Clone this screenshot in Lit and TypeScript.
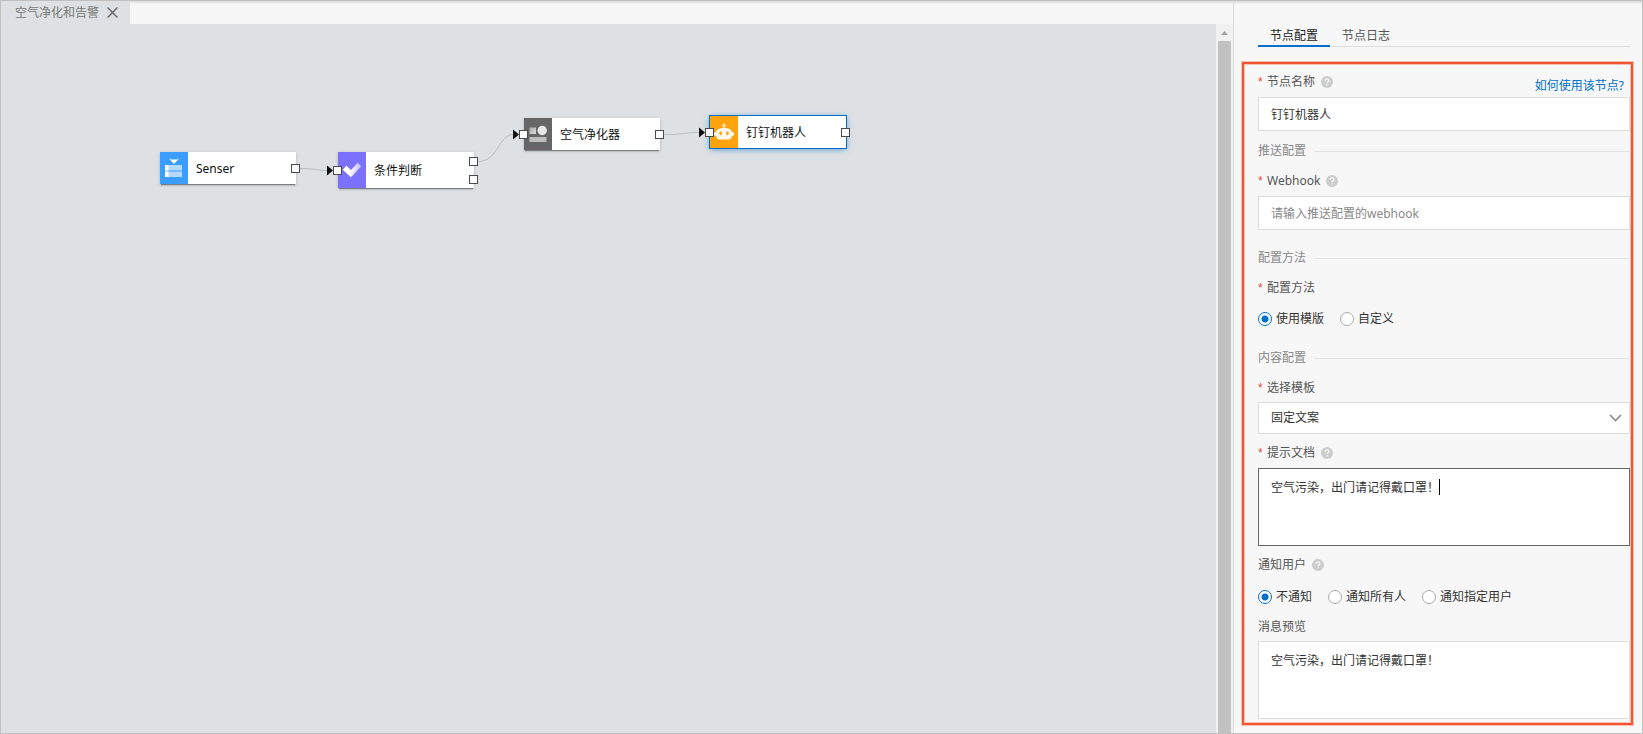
import { LitElement, html, svg, css, nothing } from "lit";
import { customElement, property, state } from "lit/decorators.js";
import { classMap } from "lit/directives/class-map.js";
import { styleMap } from "lit/directives/style-map.js";

const FONT = css`12px/20px "Noto Sans", "Noto Sans CJK SC", sans-serif`;

type Kind = "sensor" | "condition" | "device" | "robot";

interface FlowNode {
  id: string;
  kind: Kind;
  label: string;
  x: number;
  y: number;
  height: number;
  input: boolean;
  outputs: number[];
  selected?: boolean;
}

const NODE_WIDTH = 136;

const NODES: FlowNode[] = [
  { id: "n1", kind: "sensor", label: "Senser", x: 159, y: 128, height: 32, input: false, outputs: [16] },
  { id: "n2", kind: "condition", label: "条件判断", x: 337, y: 128, height: 36, input: true, outputs: [9, 27] },
  { id: "n3", kind: "device", label: "空气净化器", x: 523, y: 94, height: 32, input: true, outputs: [16] },
  { id: "n4", kind: "robot", label: "钉钉机器人", x: 709, y: 92, height: 32, input: true, outputs: [16], selected: true },
];

const LINKS: Array<[string, number, string]> = [
  ["n1", 0, "n2"],
  ["n2", 0, "n3"],
  ["n3", 0, "n4"],
];

const ICONS = {
  sensor: svg`
    <path d="M9 6.500l2.500 1h5l2.500-1-5 5.500z" fill="#fff"/>
    <rect x="5" y="13" width="17" height="5.500" fill="#b5d8ff"/>
    <rect x="5" y="19.500" width="17" height="5.500" fill="#b5d8ff"/>
    <rect x="5" y="13" width="3.500" height="5.500" fill="#fff"/>
    <rect x="5" y="19.500" width="3.500" height="5.500" fill="#fff"/>`,
  condition: svg`
    <defs><linearGradient id="ck" x1="0" y1="0" x2="1" y2="0">
      <stop offset="0.35" stop-color="#fff"/><stop offset="1" stop-color="#fff" stop-opacity="0.55"/>
    </linearGradient></defs>
    <path d="M4.700 15.800l3.700-4 4.600 4.200 6.700-7.300 3.500 3.500L13 23.300z" fill="url(#ck)"/>`,
  device: svg`
    <defs><linearGradient id="dv" x1="0" y1="0" x2="1" y2="1">
      <stop offset="0" stop-color="#a8a8a8"/><stop offset="1" stop-color="#dcdcdc"/>
    </linearGradient></defs>
    <rect x="5.500" y="9.500" width="6.500" height="6.500" fill="url(#dv)"/>
    <rect x="5.500" y="19" width="17" height="5" fill="#bdbdbd"/>
    <circle cx="18.200" cy="12.500" r="4.700" fill="#e6e6e6"/>`,
  robot: svg`
    <path d="M14 7v6M12 9.500h4" stroke="#fff" stroke-width="1.400" opacity="0.7"/>
    <path fill-rule="evenodd" fill="#fff" fill-opacity="0.92" d="M14 12c4.500 0 7 1 8 4 1.600.3 2.200 1.200 2.200 2s-.5 1.800-2.200 2c-.5 2.300-1.500 3.500-3 3.500H9c-1.500 0-2.500-1.200-3-3.500-1.500-.2-2.200-1.100-2.200-2s.6-1.700 2.200-2c1-3 3.500-4 8-4zM10.700 15.300c-.8 0-1.300.7-1.300 1.900s.5 2 1.300 2 1.300-.8 1.300-2-.5-1.900-1.300-1.900zM17.400 15.300c-.8 0-1.300.7-1.300 1.900s.5 2 1.300 2 1.300-.8 1.300-2-.5-1.900-1.300-1.900z"/>`,
};

@customElement("flow-canvas")
export class FlowCanvas extends LitElement {
  static styles = css`
    :host {
      display: block;
      position: relative;
      overflow: hidden;
      background: #dde1e4;
      font: ${FONT};
    }
    .links {
      position: absolute;
      inset: 0;
      width: 100%;
      height: 100%;
    }
    .link {
      fill: none;
      stroke: #b9bdc0;
      stroke-width: 1;
    }
    .arrow {
      fill: #111;
    }
    .node {
      position: absolute;
      display: flex;
      align-items: stretch;
      background: #fff;
      color: #111;
      box-shadow: 0 2px 1px -1px #7d8083, 0 1px 3px rgba(0, 0, 0, 0.2);
    }
    .node.selected {
      box-shadow: 0 0 0 1px #0070cc, 0 1px 6px rgba(0, 112, 204, 0.7);
    }
    .icon {
      display: grid;
      place-items: center;
      width: 28px;
    }
    .sensor .icon { background: #3b9dff; }
    .condition .icon { background: #7c71ff; }
    .device .icon { background: #666; }
    .robot .icon { background: #ffa30f; }
    .name {
      align-self: center;
      padding: 2px 0 0 8px;
    }
    .port {
      position: absolute;
      box-sizing: border-box;
      width: 9px;
      height: 9px;
      margin: -4px 0 0 -5px;
      border: 1px solid #4a4a4a;
      background: #fff;
    }
  `;

  private find(id: string) {
    return NODES.find((n) => n.id === id)!;
  }

  private renderLink([from, port, to]: [string, number, string]) {
    const a = this.find(from);
    const b = this.find(to);
    const x1 = a.x + NODE_WIDTH + 4;
    const y1 = a.y + a.outputs[port] + 0.5;
    const tip = b.x - 5;
    const y2 = b.y + b.height / 2 + 0.5;
    const mid = (x1 + tip) / 2;
    return svg`
      <path class="link" d="M${x1} ${y1}C${mid} ${y1} ${mid} ${y2} ${tip - 6} ${y2}"/>
      <path class="arrow" d="M${tip - 6} ${y2 - 5}v10l6-5z"/>`;
  }

  private renderNode(n: FlowNode) {
    const at = (x: number, y: number) => styleMap({ left: `${x}px`, top: `${y}px` });
    return html`
      <div
        class=${classMap({ node: true, [n.kind]: true, selected: !!n.selected })}
        style=${styleMap({ left: `${n.x}px`, top: `${n.y}px`, width: `${NODE_WIDTH}px`, height: `${n.height}px` })}
      >
        <span class="icon"><svg width="28" height="32" viewBox="0 0 28 32" aria-hidden="true">${ICONS[n.kind]}</svg></span>
        <span class="name">${n.label}</span>
        ${n.input ? html`<i class="port" style=${at(0, n.height / 2)}></i>` : nothing}
        ${n.outputs.map((y) => html`<i class="port" style=${at(NODE_WIDTH, y)}></i>`)}
      </div>`;
  }

  render() {
    return html`
      <svg class="links" aria-hidden="true">${LINKS.map((l) => this.renderLink(l))}</svg>
      ${NODES.map((n) => this.renderNode(n))}`;
  }
}

@customElement("field-label")
export class FieldLabel extends LitElement {
  static styles = css`
    :host {
      display: flex;
      align-items: center;
      font: ${FONT};
      color: #555;
    }
    .star {
      width: 9px;
      font-family: "Liberation Sans", sans-serif;
      color: #e0483e;
    }
    .help {
      display: block;
      margin-left: 6px;
    }
  `;

  @property({ type: Boolean }) required = false;
  @property({ type: Boolean }) help = false;

  render() {
    return html`
      ${this.required ? html`<span class="star">*</span>` : nothing}
      <slot></slot>
      ${this.help
        ? html`<svg class="help" width="12" height="12" viewBox="0 0 12 12" aria-hidden="true">
            <circle cx="6" cy="6" r="6" fill="#ccc" />
            <path d="M4.200 4.700c0-2.400 3.700-2.300 3.700-.1 0 1.300-1.800 1.300-1.800 2.700M6.100 8.200v1.300" fill="none" stroke="#f7f7f7" stroke-width="1.300" />
          </svg>`
        : nothing}`;
  }
}

@customElement("node-panel")
export class NodePanel extends LitElement {
  static styles = css`
    :host {
      display: flex;
      flex-direction: column;
      box-sizing: border-box;
      padding: 23px 9px 8px 8px;
      border-left: 1px solid #ddd;
      font: ${FONT};
      color: #333;
    }
    button, input, select, textarea {
      font: inherit;
      color: inherit;
      border-radius: 0;
    }
    .tabs {
      display: flex;
      margin: 0 3px 15px 16px;
      box-shadow: inset 0 -1px #ddd;
    }
    .tab {
      padding: 3px 12px 0;
      border: 0;
      border-bottom: 2px solid transparent;
      background: none;
      line-height: 18px;
      color: #555;
    }
    .tab.on {
      border-color: #0070cc;
      color: #222;
    }
    .frame {
      flex: 1;
      display: flex;
      flex-direction: column;
      padding: 8px 1px 3px 14px;
      border: 2px solid #f15533;
      box-shadow: 0 0 0 1px #f9c0b2, inset 0 0 0 1px #f9c0b2;
    }
    .head {
      display: flex;
      justify-content: space-between;
    }
    .link {
      padding: 4px 6px 0 0;
      margin-bottom: -4px;
      color: #0070cc;
      text-decoration: none;
    }
    .box {
      box-sizing: border-box;
      width: 100%;
      margin: 5px 0 10px;
      padding: 0 12px;
      border: 1px solid #ddd;
      background: #fff;
      outline: none;
    }
    .input {
      height: 34px;
    }
    .input::placeholder {
      color: #888;
      opacity: 1;
    }
    .section {
      display: flex;
      align-items: center;
      gap: 8px;
      margin: 0 0 10px;
      font: inherit;
      color: #888;
    }
    .section::after {
      content: "";
      flex: 1;
      height: 1px;
      background: #e2e2e2;
    }
    .gap {
      margin-top: 8px;
    }
    .pick {
      display: grid;
      align-items: center;
    }
    .pick > * {
      grid-area: 1 / 1;
    }
    .select {
      height: 32px;
      margin: 4px 0 9px;
      appearance: none;
    }
    .chevron {
      justify-self: end;
      margin: 0 8px 5px 0;
      pointer-events: none;
    }
    .area {
      display: block;
      height: 78px;
      margin-bottom: 9px;
      padding-top: 9px;
      resize: none;
    }
    .editing {
      position: relative;
    }
    .editing .area {
      border-color: #666;
      caret-color: transparent;
    }
    .caret {
      position: absolute;
      left: 181px;
      top: 16px;
      width: 1px;
      height: 16px;
      background: #000;
    }
    .radios {
      display: flex;
      gap: 16px;
      margin: 12px 0 10px;
      padding: 0;
      border: 0;
    }
    .radios.wide {
      margin: 11px 0 19px;
    }
    .radio {
      display: flex;
      align-items: center;
      gap: 4px;
    }
    .radio input {
      appearance: none;
      box-sizing: border-box;
      width: 14px;
      height: 14px;
      margin: 0;
      border: 1px solid #aaa;
      border-radius: 50%;
      background: #fff;
    }
    .radio input:checked {
      border-color: #0070cc;
      background: radial-gradient(circle, #0070cc 3px, #fff 4px);
    }
    .last {
      margin: 4px 0 0;
    }
  `;

  @state() private method = "使用模版";
  @state() private notify = "不通知";
  @state() private message = "空气污染，出门请记得戴口罩！";

  private radios(name: string, label: string, options: string[], value: string, pick: (v: string) => void, wide = false) {
    return html`
      <div class=${classMap({ radios: true, wide })} role="radiogroup" aria-label=${label}>
        ${options.map(
          (o) => html`<label class="radio">
            <input type="radio" name=${name} .checked=${o === value} @change=${() => pick(o)} />${o}
          </label>`
        )}
      </div>`;
  }

  render() {
    return html`
      <div class="tabs" role="tablist">
        <button class="tab on" role="tab" aria-selected="true">节点配置</button>
        <button class="tab" role="tab" aria-selected="false">节点日志</button>
      </div>
      <form class="frame">
        <div class="head">
          <label for="name"><field-label required help>节点名称</field-label></label>
          <a class="link" href="#help">如何使用该节点?</a>
        </div>
        <input class="box input" id="name" type="text" value="钉钉机器人" />

        <h3 class="section">推送配置</h3>
        <label for="hook"><field-label required help>Webhook</field-label></label>
        <input class="box input" id="hook" type="text" placeholder="请输入推送配置的webhook" />

        <h3 class="section gap">配置方法</h3>
        <field-label required>配置方法</field-label>
        ${this.radios("method", "配置方法", ["使用模版", "自定义"], this.method, (v) => (this.method = v), true)}

        <h3 class="section">内容配置</h3>
        <label for="tpl"><field-label required>选择模板</field-label></label>
        <div class="pick">
          <select class="box select" id="tpl">
            <option>固定文案</option>
          </select>
          <svg class="chevron" width="13" height="8" viewBox="0 0 13 8" aria-hidden="true">
            <path d="M1 1l5.500 5.500L12 1" fill="none" stroke="#888" stroke-width="1.600" />
          </svg>
        </div>

        <label for="doc"><field-label required help>提示文档</field-label></label>
        <div class="editing">
          <textarea
            class="box area"
            id="doc"
            .value=${this.message}
            @input=${(e: Event) => (this.message = (e.target as HTMLTextAreaElement).value)}
          ></textarea>
          <i class="caret"></i>
        </div>

        <field-label help>通知用户</field-label>
        ${this.radios("notify", "通知用户", ["不通知", "通知所有人", "通知指定用户"], this.notify, (v) => (this.notify = v))}

        <label for="preview"><field-label>消息预览</field-label></label>
        <textarea class="box area last" id="preview" readonly .value=${this.message}></textarea>
      </form>`;
  }
}

@customElement("app-root")
export class AppRoot extends LitElement {
  static styles = css`
    :host {
      display: grid;
      grid-template-columns: minmax(0, 1fr) 409px;
      box-sizing: border-box;
      min-height: 100vh;
      border: 1px solid #c0c0c0;
      background: #f7f7f7;
      box-shadow: inset 0 3px 3px -2px rgba(0, 0, 0, 0.16);
      font: ${FONT};
    }
    .editor {
      display: grid;
      grid-template-rows: 23px 1fr;
    }
    .files {
      display: flex;
    }
    .file {
      display: flex;
      align-items: center;
      gap: 8px;
      padding: 0 12px 0 14px;
      background: #dde1e4;
      color: #777;
    }
    .close {
      display: block;
      padding: 0;
      border: 0;
      background: none;
    }
    .close svg {
      display: block;
    }
    .stage {
      display: grid;
      grid-template-columns: minmax(0, 1fr) 17px;
    }
    .scroll {
      display: flex;
      flex-direction: column;
      background: #f1f1f1;
    }
    .up {
      display: grid;
      place-items: center;
      height: 17px;
    }
    .thumb {
      flex: 1;
      margin: 0 2px;
      background: #c1c1c1;
    }
  `;

  render() {
    return html`
      <main class="editor">
        <div class="files">
          <div class="file">
            <span>空气净化和告警</span>
            <button class="close" aria-label="关闭">
              <svg width="11" height="11" viewBox="0 0 11 11" aria-hidden="true">
                <path d="M.6.600l9.800 9.800M10.400.600L.6 10.400" stroke="#666" stroke-width="1.400" />
              </svg>
            </button>
          </div>
        </div>
        <div class="stage">
          <flow-canvas></flow-canvas>
          <div class="scroll" aria-hidden="true">
            <span class="up"><svg width="7" height="4" viewBox="0 0 7 4"><path d="M0 4l3.500-4L7 4z" fill="#a3a3a3" /></svg></span>
            <span class="thumb"></span>
          </div>
        </div>
      </main>
      <node-panel></node-panel>`;
  }
}
